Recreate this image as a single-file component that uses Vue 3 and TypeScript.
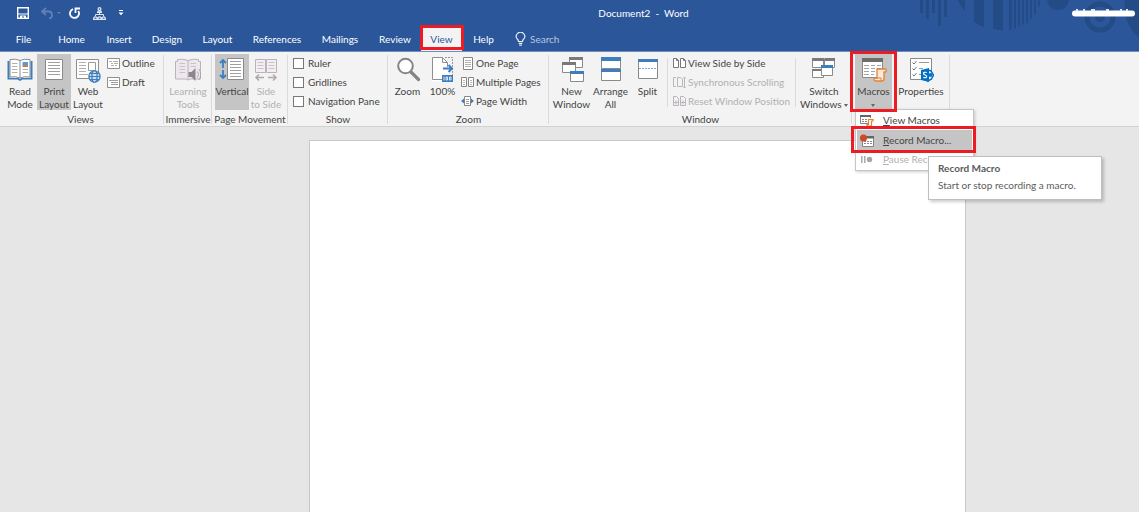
<script setup lang="ts">
import { ref } from 'vue'

const tabs: string[] = ['File', 'Home', 'Insert', 'Design', 'Layout', 'References', 'Mailings', 'Review', 'View', 'Help']
const activeTab = ref('View')
const search = ref('')

const showOptions = ref([
  { label: 'Ruler', checked: false },
  { label: 'Gridlines', checked: false },
  { label: 'Navigation Pane', checked: false },
])
</script>

<template>
  <div class="app">
    <header class="header">
      <svg class="decor" width="240" height="52" viewBox="0 0 240 52" aria-hidden="true">
        <g fill="#234b86">
          <path d="M21 0h3v13h-3zM27 0h3v19h-3zM33 0h3v13h-3zM39 0h3v26h-3zM45 0h3v17h-3z" />
          <path d="M59 0h7v11Q61 6 59 0zM75 0h10v27q-6-2-10-5zM94 0h10v30q-6 0-10-1zM110 0h3v29l-3 1zM115 0h2v28l-2 1zM119 0h2v26l-2 1zM123 0h2v24l-2 1zM127 0h2v22l-2 2zM131 0h2v18l-2 2zM135 0h2v13l-2 2zM139 0h2v5l-2 3z" />
          <path d="M148 0h22q-2 10-11 10T148 0z" />
          <circle cx="201" cy="17" r="5" />
          <path d="M226 0h14v38q-17-15-14-38z" />
        </g>
        <circle cx="201" cy="17" r="13" fill="none" stroke="#234b86" stroke-width="5" />
        <path d="M176 13.500H233" stroke="#fff" stroke-width="6" stroke-linecap="round" />
        <path d="M177 10h2m5 0h2m6 0h4m11 0h3m11 0h2m4 0h2" stroke="#dfe7f4" stroke-width="2" />
      </svg>

      <div class="titlebar">
        <div class="quick">
          <button aria-label="Save">
            <svg width="12" height="12" viewBox="0 0 12 12"><path d="M.7.700h10.600v10.600H.7z" fill="none" stroke="#fff" stroke-width="1.400" /><path d="M1 6.500h10v1H1zM3 8.500h6V11H7V9.500H5V11H3z" fill="#fff" /></svg>
          </button>
          <button class="undo" aria-label="Undo">
            <svg width="20" height="12" viewBox="0 0 20 12"><path d="M5 1 1 4.500 5 8M1 4.500h6.500q3.500 0 3.500 3.500T8 11.300" fill="none" stroke="#6080b8" stroke-width="1.800" /><path d="M16 5h4l-2 2z" fill="#6080b8" /></svg>
          </button>
          <button aria-label="Repeat">
            <svg width="12" height="12" viewBox="0 0 12 12"><path d="M4 2.200A4.500 4.500 0 1 0 9.300 4M6.500 6V1.500H11" fill="none" stroke="#fff" stroke-width="1.800" /></svg>
          </button>
          <button aria-label="Organization chart">
            <svg width="13" height="13" viewBox="0 0 13 13"><path d="M6.500 5v2M2.500 9V7.500h8V9" fill="none" stroke="#dfe7f4" /><g fill="none" stroke="#dfe7f4" stroke-width="1.200"><circle cx="6.500" cy="2" r="1.400" /><path d="M4.500 5.400q0-1.500 2-1.500t2 1.500zM.6 12.300q0-2.500 1.800-2.500t1.800 2.500zM4.800 12.300q0-2.500 1.800-2.500t1.800 2.500zM9 12.300q0-2.500 1.700-2.500t1.700 2.500z" /></g></svg>
          </button>
          <button aria-label="Customize quick access">
            <svg width="6" height="8" viewBox="0 0 6 8"><path d="M1 1.500h4" stroke="#fff" /><path d="M.5 3.500h5L3 6.200z" fill="#fff" /></svg>
          </button>
        </div>
        <h1 class="title">Document2&nbsp; -&nbsp; Word</h1>
      </div>

      <nav class="tabs">
        <button v-for="tab in tabs" :key="tab" class="tab" :class="{ active: tab === activeTab }" @click="activeTab = tab">{{ tab }}</button>
        <label class="search">
          <svg width="11" height="14" viewBox="0 0 11 14"><path d="M3.500 9.500Q3.500 8 2.200 7a4.200 4.200 0 1 1 6.600 0Q7.500 8 7.500 9.500zM3.700 11.300h3.600M4.200 13.200h2.600" fill="none" stroke="#e6ecf6" stroke-width="1.200" /></svg>
          <input v-model="search" type="text" placeholder="Search" aria-label="Search">
        </label>
      </nav>
    </header>

    <section class="ribbon">
      <div class="group views">
        <div class="body">
          <button class="big">
            <svg width="26" height="27" viewBox="0 0 26 27"><path d="M.5 4h2v17h9l1.500 1 1.500-1h9V4h2v18.500h-10L13 24l-2.500-1.500H.5z" fill="#3d7ebf" /><path d="M3 2.500q6-1 10 1 4-2 10-1V20q-6-1-10 1-4-2-10-1z" fill="#fff" stroke="#8a8a8a" /><path d="M13 3.500V21" stroke="#8a8a8a" /><path d="M5 6.500h5.500M5 9.500h5.500M5 12.500h5.500M5 15.500h5.500M15.500 12.500H21M15.500 15.500H21" stroke="#b0b0b0" /><path d="M15.500 5H21v5h-5.500z" fill="#5b9bd5" /><path d="m16 10 2-3 3 3z" fill="#d9783a" /></svg>
            <span>Read<br>Mode</span>
          </button>
          <button class="big on">
            <svg width="26" height="27" viewBox="0 0 26 27"><path d="M4.500 2.500h17v20h-17z" fill="#fff" stroke="#8a8a8a" /><path d="M7 5.500h12M7 8.500h12M7 11.500h12M7 14.500h12M7 17.500h12" stroke="#a0a0a0" /></svg>
            <span>Print<br>Layout</span>
          </button>
          <button class="big">
            <svg width="26" height="27" viewBox="0 0 26 27"><path d="M1.500 2.500h22v19h-22z" fill="#fff" stroke="#8f8f8f" /><path d="M4 5.500h7M4 8.500h7M4 11.500h7M4 14.500h7M4 17.500h9" stroke="#b0b0b0" /><path d="M13.500 5.500h7v8h-7z" fill="#fff" stroke="#9a9a9a" /><g fill="#fff" stroke="#3d7ebf" stroke-width="1.300"><circle cx="19.500" cy="19.500" r="5.600" /><ellipse cx="19.500" cy="19.500" rx="2.600" ry="5.600" /><path d="M14 19.500h11M15 16.500h9M15 22.500h9" fill="none" /></g></svg>
            <span>Web<br>Layout</span>
          </button>
          <div class="stack">
            <button class="small"><svg width="13" height="13" viewBox="0 0 13 13"><path d="M.5 1.500h12v10H.5z" fill="#fff" stroke="#8f8f8f" /><path d="M2 4.500h3M6 4.500h5M4 6.500h2M7 6.500h4M4 8.500h3M8 8.500h2" stroke="#b0b0b0" /></svg>Outline</button>
            <button class="small"><svg width="13" height="13" viewBox="0 0 13 13"><path d="M.5 1.500h12v10H.5z" fill="#fff" stroke="#8f8f8f" /><path d="M2 4.500h9M4 6.500h7M4 8.500h7" stroke="#a0a0a0" /></svg>Draft</button>
          </div>
        </div>
        <h2>Views</h2>
      </div>

      <div class="group immersive">
        <div class="body">
          <button class="big" disabled>
            <svg width="26" height="27" viewBox="0 0 26 27"><path d="M.5 4.500h2V2.500q6-1 10.500 1 4.500-2 10.500-1v2h2V22h-10L13 23l-2.500-1H.5z" fill="#eee7ee" stroke="#b9b4b9" /><path d="M13 3.500V22" stroke="#b9b4b9" /><path d="M4.500 6.500H10M4.500 9.500H10M4.500 12.500H10M4.500 15.500H10M15.500 6.500H21M15.500 9.500H21" stroke="#c9c3c9" /><path d="M13.500 15h3l4-4v13l-4-4h-3z" fill="#8c888c" /><path d="M22.500 14.500q2 3 0 6M24 12q3.500 5.500 0 11" fill="none" stroke="#aaa" /></svg>
            <span>Learning<br>Tools</span>
          </button>
        </div>
        <h2>Immersive</h2>
      </div>

      <div class="group movement">
        <div class="body">
          <button class="big on">
            <svg width="26" height="27" viewBox="0 0 26 27"><path d="M8.500 1.500h16v21h-16z" fill="#fff" stroke="#8a8a8a" /><path d="M11 4.500h11M11 7.500h11M11 10.500h11M11 13.500h11M11 16.500h11M11 19.500h11" stroke="#a0a0a0" /><path d="M4 3v8M1 6l3-3 3 3M4 13v8M1 18l3 3 3-3" fill="none" stroke="#3d7ebf" stroke-width="1.800" /></svg>
            <span>Vertical</span>
          </button>
          <button class="big" disabled>
            <svg width="26" height="27" viewBox="0 0 26 27"><path d="M2.500 2.500h10v13h-10zM13.500 2.500h10v13h-10z" fill="#f4edf4" stroke="#b9b4b9" /><path d="M4.500 5.500h6M4.500 8.500h6M4.500 11.500h6M15.500 5.500h6M15.500 8.500h6M15.500 11.500h6" stroke="#c9c3c9" /><path d="M11 20.500H3M6 17.500l-3 3 3 3M15 20.500h8M20 17.500l3 3-3 3" fill="none" stroke="#aaa" stroke-width="1.500" /></svg>
            <span>Side<br>to Side</span>
          </button>
        </div>
        <h2>Page Movement</h2>
      </div>

      <div class="group show">
        <div class="body">
          <div class="stack">
            <label v-for="option in showOptions" :key="option.label" class="small">
              <input v-model="option.checked" type="checkbox">{{ option.label }}
            </label>
          </div>
        </div>
        <h2>Show</h2>
      </div>

      <div class="group zoom">
        <div class="body">
          <button class="big">
            <svg width="26" height="27" viewBox="0 0 26 27"><path d="m16 15 7.500 7.500" stroke="#858585" stroke-width="3.200" stroke-linecap="round" /><circle cx="10.500" cy="9" r="7.300" fill="#fff" stroke="#858585" stroke-width="2" /></svg>
            <span>Zoom</span>
          </button>
          <button class="big">
            <svg width="26" height="27" viewBox="0 0 26 27"><path d="M2.500.500h12v5h5v19h-17z" fill="#fff" /><path d="M12 22.500H2.500V.500h10l5 5V10M12.500.500v5h5" fill="none" stroke="#8f8f8f" /><path d="M15 .500h7.500V18" fill="none" stroke="#999" stroke-dasharray="2 1" /><path d="M13 11.500h9M18.500 8l3.500 3.500-3.500 3.500" fill="none" stroke="#3d7ebf" stroke-width="2" /><path d="M12 18h11v7H12z" fill="#3d7ebf" /><path d="M14 19.500v4M16 20h1.500v3H16zM19.500 20H21v3h-1.500z" fill="none" stroke="#fff" stroke-width=".8" /></svg>
            <span>100%</span>
          </button>
          <div class="stack">
            <button class="small"><svg width="13" height="13" viewBox="0 0 13 13"><path d="M2.500.500h9v12h-9z" fill="#fff" stroke="#858585" /><path d="M4 3.500h6M4 5.500h6M4 7.500h6M4 9.500h6" stroke="#b0b0b0" /></svg>One Page</button>
            <button class="small"><svg width="13" height="13" viewBox="0 0 13 13"><path d="M.5 1.500h5v9h-5zM7.500 1.500h5v9h-5z" fill="#fff" stroke="#858585" /><path d="M2 4.500h2M2 6.500h2M2 8.500h2M9 4.500h2M9 6.500h2M9 8.500h2" stroke="#b5b5b5" /></svg>Multiple Pages</button>
            <button class="small"><svg width="13" height="13" viewBox="0 0 13 13"><path d="M3.500 1.500h6v9h-6z" fill="#fff" stroke="#858585" /><path d="M5 4.500h3M5 6.500h3M5 8.500h3" stroke="#9a9a9a" /><path d="M3 3.500v5L0 6zM10 3.500v5L13 6z" fill="#3d7ebf" /></svg>Page Width</button>
          </div>
        </div>
        <h2>Zoom</h2>
      </div>

      <div class="group window">
        <div class="body">
          <button class="big">
            <svg width="26" height="27" viewBox="0 0 26 27"><g fill="#fff" stroke="#8a8a8a"><path d="M10.500.500h13v10h-13z" /><path d="M3.500 5.500h13v10h-13z" /><path d="M11.500 14.500h13v10h-13z" /></g><path d="M10 0h14v3H10zM3 5h14v3H3z" fill="#7a7a7a" /><path d="M11 14h14v3H11z" fill="#3d7ebf" /></svg>
            <span>New<br>Window</span>
          </button>
          <button class="big">
            <svg width="26" height="27" viewBox="0 0 26 27"><path d="M3.500.500h19v11h-19zM3.500 12.500h19v11h-19z" fill="#fff" stroke="#8a8a8a" /><path d="M3 0h20v4H3zM3 12h20v3H3z" fill="#3d7ebf" /></svg>
            <span>Arrange<br>All</span>
          </button>
          <button class="big">
            <svg width="26" height="27" viewBox="0 0 26 27"><path d="M3.500 2.500h19v19h-19z" fill="#fff" stroke="#8a8a8a" /><path d="M3 2h20v3H3z" fill="#3d7ebf" /><path d="M4 11.500h18" stroke="#79a9d8" stroke-dasharray="2 1" /></svg>
            <span>Split</span>
          </button>
          <div class="divider"></div>
          <div class="stack side">
            <button class="small"><svg width="13" height="13" viewBox="0 0 13 13"><path d="M.5 1.500h3l2 2v7h-5zM7.500 1.500h3l2 2v7h-5zM3.500 1.500v2h2M10.500 1.500v2h2" fill="#fff" stroke="#777" /></svg>View Side by Side</button>
            <button class="small" disabled><svg width="13" height="13" viewBox="0 0 13 13"><path d="M3 1.500H.5v9H3M4.500 1.500h3l2 2v7h-5zM11.500 1v11M10 2.500l1.500-1.500L13 2.500M10 10.500l1.500 1.500 1.500-1.500" fill="none" stroke="#bdb5bd" /></svg>Synchronous Scrolling</button>
            <button class="small" disabled><svg width="13" height="13" viewBox="0 0 13 13"><path d="M.5 1.500h3l2 2v7h-5zM7.500 1.500h3l2 2v7h-5zM1 7.500h4M3 5.500v4M8 7.500h4M10 5.500v4" fill="none" stroke="#bdb5bd" /></svg>Reset Window Position</button>
          </div>
          <div class="divider"></div>
          <button class="big">
            <svg width="26" height="27" viewBox="0 0 26 27"><g fill="#fff" stroke="#8a8a8a"><path d="M1.500 1.500h11v9h-11zM13.500 1.500h10v9h-10zM1.500 12.500h11v8h-11z" /><path d="M10.500 8.500h11v10h-11z" /></g><path d="M1 1h12v3H1zM14 1h10v3H14zM1 12h9v2H1z" fill="#7a7a7a" /><path d="M10 8h12v3H10z" fill="#3d7ebf" /></svg>
            <span>Switch<br>Windows&nbsp;<i class="caret"></i></span>
          </button>
        </div>
        <h2>Window</h2>
      </div>

      <div class="group macros">
        <div class="body">
          <div class="dropdown">
            <button class="big on marked" aria-haspopup="menu" aria-expanded="true">
              <svg width="26" height="27" viewBox="0 0 26 27"><path d="M1.500 1.500h20v19h-20z" fill="#fff" stroke="#8a8a8a" /><path d="M1 1h21v4H1z" fill="#6d6d6d" /><path d="M3 8.500h5M10 8.500h4M16 8.500h4M3 11.500h5M10 11.500h4M16 11.500h4M3 14.500h5M10 14.500h4M3 17.500h5M10 17.500h3" stroke="#a5a5a5" /><path d="M16 12h8.500q1.500 1.500 0 3H23v6.500q0 2.500-2 2.500h-7q-2-1.500 0-3h2z" fill="#fbe9da" stroke="#e08335" stroke-width="1.300" /><path d="M14 21h6v2.500" fill="none" stroke="#e08335" /></svg>
              <span>Macros<br><i class="caret"></i></span>
            </button>
            <div class="menu" role="menu">
              <button class="item" role="menuitem">
                <svg width="14" height="13" viewBox="0 0 14 13"><path d="M8 9.500H.5v-8h10V4" fill="#fff" stroke="#858585" /><path d="M0 1h11v2H0z" fill="#666" /><path d="M2 5.500h2M5 5.500h2M2 7.500h2M5 7.500h2" stroke="#888" /><path d="M8.500 5.500h4.500v1.500h-1.500v5H7v-1.500h1.500z" fill="#fff" stroke="#e08335" stroke-width="1.200" /></svg>
                <span><u>V</u>iew Macros</span>
              </button>
              <button class="item current" role="menuitem">
                <svg width="14" height="13" viewBox="0 0 14 13"><path d="M2.500 2.500h11v10h-11z" fill="#fff" stroke="#858585" /><path d="M6 2h8v2.500H6z" fill="#666" /><path d="M4 7.500h2M7 7.500h2M10 7.500h2M4 9.500h2M7 9.500h2M10 9.500h2" stroke="#888" /><circle cx="3.500" cy="4" r="3.500" fill="#d24726" /></svg>
                <span><u>R</u>ecord Macro...</span>
              </button>
              <button class="item" role="menuitem" disabled>
                <svg width="14" height="13" viewBox="0 0 14 13"><path d="M1 3h1.500v7H1zM4 3h1.500v7H4z" fill="#aaa" /><circle cx="9.500" cy="6.500" r="2.700" fill="#a5a5a5" /></svg>
                <span><u>P</u>ause Recording</span>
              </button>
              <div class="tooltip" role="tooltip">
                <strong>Record Macro</strong>
                <p>Start or stop recording a macro.</p>
              </div>
            </div>
          </div>
          <button class="big properties">
            <svg width="26" height="27" viewBox="0 0 26 27"><path d="M2.500 1.500h21v21h-21z" fill="#fff" stroke="#8a8a8a" /><path d="m4.500 5.500 1.500 1.500 2.500-3M4.500 11.500 6 13l2.500-3M4.500 17.500 6 19l2.500-3" fill="none" stroke="#777" /><path d="M11 5.500h10M11 11.500h4M11 17.500h2" stroke="#999" /><path d="m20 13 3 1 2.500 4-2 4-3.500 2z" fill="#fff" stroke="#0072c6" stroke-width="1.500" /><circle cx="22.500" cy="18" r="2" fill="#0072c6" /><path d="m13 13 8-2v14l-8-2z" fill="#0072c6" /><path d="M18.800 15.500q-3.300-.8-3.300 1 0 .9 1.600 1.500t1.600 1.500q0 1.700-3.300.8" fill="none" stroke="#fff" stroke-width="1.200" /></svg>
            <span>Properties</span>
          </button>
        </div>
      </div>
    </section>

    <main class="canvas">
      <article class="page" contenteditable="true" aria-label="Document page"></article>
    </main>
  </div>
</template>

<style>
body {
  margin: 0;
}
</style>

<style scoped>
.app {
  min-height: 100vh;
  display: flex;
  flex-direction: column;
  overflow-x: hidden;
  background: #e6e6e6;
  color: #444;
  font: 10px/13px Lato, "Open Sans", sans-serif;
}
button,
input {
  margin: 0;
  padding: 0;
  border: 0;
  background: none;
  color: inherit;
  font: inherit;
}
svg {
  display: block;
  flex: none;
}
h1,
h2,
p {
  margin: 0;
  font: inherit;
}

.header {
  position: relative;
  height: 51px;
  background: #2b579a;
  border-bottom: 1px solid #6f8dbf;
  color: #fff;
}
.decor {
  position: absolute;
  top: 0;
  right: 0;
}
.titlebar {
  height: 26px;
  display: grid;
  grid-template-columns: 1fr auto 1fr;
  align-items: center;
}
.quick {
  display: flex;
  align-items: center;
  gap: 12px;
  padding-left: 17px;
}
.quick .undo {
  margin-right: -4px;
}
.title {
  padding-left: 148px;
}
.tabs {
  position: relative;
  height: 25px;
  display: grid;
  grid-template-columns: 47px 49px 46px 50px 51px 68px 58px 52px 41px 43px auto;
  justify-content: start;
}
.tab {
  position: relative;
  padding-top: 1px;
  white-space: nowrap;
}
.tab.active {
  background: #f3f3f3;
  color: #2b579a;
}
.tab.active::after,
.marked::after,
.current::after {
  content: "";
  position: absolute;
  border: 3px solid #ec1c24;
  pointer-events: none;
}
.tab.active::after {
  inset: -1px -2px 1px -1px;
}
.search {
  display: flex;
  align-items: center;
  gap: 4px;
  padding: 1px 0 0 10px;
}
.search input {
  width: 80px;
  outline: none;
}
.search input::placeholder {
  color: #b8c6e0;
  opacity: 1;
}

.ribbon {
  height: 74px;
  display: flex;
  background: #f3f3f3;
  border-bottom: 1px solid #d2d2d2;
}
.group {
  position: relative;
  flex: none;
  box-sizing: border-box;
  display: flex;
  flex-direction: column;
  padding-top: 2px;
}
.group::after {
  content: "";
  position: absolute;
  top: 3px;
  right: 0;
  bottom: 2px;
  border-right: 1px solid #dadada;
}
.group h2 {
  margin-top: 3px;
  text-align: center;
  white-space: nowrap;
}
.body {
  display: flex;
  height: 56px;
}
.views {
  width: 164px;
  padding-left: 3px;
}
.views h2 {
  padding-right: 6px;
}
.immersive {
  width: 48px;
}
.immersive .body {
  justify-content: center;
}
.movement {
  width: 76px;
}
.movement .body {
  padding-left: 3px;
}
.show {
  width: 100px;
}
.show .body {
  padding-left: 3px;
}
.zoom {
  width: 161px;
}
.zoom .body {
  padding-left: 2px;
}
.window {
  width: 303px;
}
.window .body {
  padding-left: 3px;
}
.macros {
  width: 98px;
}
.macros .body {
  padding-left: 3px;
}

.big {
  position: relative;
  width: 34px;
  flex: none;
  display: flex;
  flex-direction: column;
  align-items: center;
  gap: 1px;
  padding-top: 3px;
  text-align: center;
  white-space: nowrap;
}
.big.on {
  background: #c5c5c5;
}
.zoom .big {
  width: 35px;
}
.window .big {
  width: 39px;
}
.window .big:nth-child(3) {
  width: 35px;
}
.window .big:last-child {
  width: 56px;
}
button:disabled {
  color: #b1b1b1;
}
.dropdown {
  position: relative;
  display: flex;
}
.dropdown .marked {
  width: 37px;
}
.marked::after {
  inset: -3px -5px -2px -5px;
  z-index: 3;
}
.big.properties {
  width: 58px;
}
.caret {
  display: inline-block;
  vertical-align: middle;
  border: 2px solid transparent;
  border-top: 3px solid #666;
  border-bottom: 0;
}
.stack {
  display: flex;
  flex-direction: column;
  gap: 1px;
  padding-left: 2px;
}
.zoom .stack {
  padding-left: 1px;
}
.stack.side {
  width: 122px;
  padding-left: 5px;
}
.small {
  height: 18px;
  display: flex;
  align-items: center;
  gap: 2px;
  white-space: nowrap;
}
.small input {
  appearance: none;
  width: 11px;
  height: 11px;
  box-sizing: border-box;
  margin-right: 2px;
  border: 1px solid #777;
  background: #fff;
}
.small input:checked {
  background: #2b579a;
}
.divider {
  width: 1px;
  margin: 4px 0 3px;
  background: #dadada;
}
.window .divider:nth-child(4) {
  margin-left: 2px;
}

.menu {
  position: absolute;
  top: 55px;
  left: 0;
  z-index: 2;
  box-sizing: border-box;
  width: 119px;
  padding: 1px;
  border: 1px solid #c6c6c6;
  background: #fff;
  box-shadow: 1px 1px 3px rgba(0, 0, 0, 0.2);
}
.item {
  position: relative;
  width: 100%;
  height: 19px;
  display: flex;
  align-items: center;
  gap: 9px;
  padding-left: 3px;
  white-space: nowrap;
}
.item.current {
  height: 20px;
  background: #c5c5c5;
}
.current::after {
  inset: -4px -4px -3px -6px;
}
.tooltip {
  position: absolute;
  top: 46px;
  left: 72px;
  z-index: 4;
  box-sizing: border-box;
  width: 174px;
  padding: 5px 9px 7px;
  border: 1px solid #bebebe;
  background: #fff;
  box-shadow: 2px 2px 3px rgba(0, 0, 0, 0.2);
  color: #5c5c5c;
  white-space: nowrap;
}
.tooltip p {
  margin-top: 4px;
}

.canvas {
  flex: 1;
  display: flex;
  padding: 13px 173px 0 309px;
}
.page {
  flex: 1;
  border: 1px solid #c8c8c8;
  border-bottom: 0;
  background: #fff;
  outline: none;
}
</style>
